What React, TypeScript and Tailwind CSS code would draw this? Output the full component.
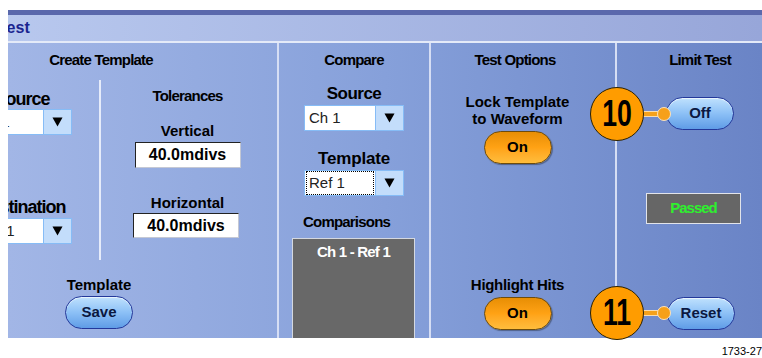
import React from "react";

type DropdownProps = {
  value: string;
  focused?: boolean;
  textPad?: string;
};

const Arrow: React.FC = () => (
  <svg width="11" height="10" viewBox="0 0 11 10">
    <path d="M0.5 0.5h10L5.5 9.5z" fill="#000" />
  </svg>
);

const Dropdown: React.FC<DropdownProps> = ({ value, focused, textPad }) => {
  return (
    <div className="flex h-[26px]">
      <div className="flex w-[72px] items-center border-[1.5px] border-[#86bcf6] bg-white px-[1px]">
        {focused ? (
          <div className="flex h-full w-full items-center border border-dotted border-black pl-[2px] text-[15px] text-[#222]">
            {value}
          </div>
        ) : (
          <span className={`text-[15px] text-[#222] ${textPad ?? "pl-[3px]"}`}>{value}</span>
        )}
      </div>
      <div className="flex w-[28px] items-center justify-center border-[1.5px] border-l-0 border-[#86bcf6] bg-[#c3ddfb]">
        <Arrow />
      </div>
    </div>
  );
};

const BlueButton: React.FC<{ label: string }> = ({ label }) => (
  <div className="flex h-[33px] w-[68px] items-center justify-center rounded-full border-[1.5px] border-[#23389a] bg-linear-to-b from-[#bfe1fd] via-[#8cc0f6] to-[#5f9ce6] text-[15px] font-bold text-[#0b1840] shadow-[inset_0_1px_1px_rgba(255,255,255,0.7)]">
    {label}
  </div>
);

const OrangeButton: React.FC<{ label: string }> = ({ label }) => (
  <div className="flex h-[33px] w-[68px] items-center justify-center rounded-full border-[1.5px] border-[#6e4c0c] bg-linear-to-b from-[#e88e04] via-[#ffa214] to-[#ffbd3c] text-[15px] font-bold text-black shadow-[1px_1px_1px_rgba(0,0,0,0.35)]">
    {label}
  </div>
);

const Callout: React.FC<{ num: string; top: string; lineTop: string; dotTop: string }> = ({
  num,
  top,
  lineTop,
  dotTop,
}) => (
  <>
    <div className={`absolute left-[636px] h-[4px] w-[24px] bg-[#f5a11c] ring-1 ring-[#f9dcb0] ${lineTop}`} />
    <div className={`absolute left-[649px] h-[14px] w-[14px] rounded-full border-[1.5px] border-[#fbe2bd] bg-[#f6a01a] ${dotTop}`} />
    <div
      className={`absolute left-[582px] flex h-[54px] w-[54px] items-center justify-center rounded-full border-[1.5px] border-[#2b2000] bg-[#ff9c00] ${top}`}
    >
      <span className="inline-block scale-x-[0.74] text-[36px] leading-none font-bold text-black">{num}</span>
    </div>
  </>
);

const Heading: React.FC<{ children: React.ReactNode; className?: string }> = ({ children, className }) => (
  <div className={`text-center text-[15px] leading-[18px] font-bold tracking-[-0.8px] text-black ${className ?? ""}`}>
    {children}
  </div>
);

const Divider: React.FC = () => <div className="w-[2px] shrink-0 bg-[#d6def4]" />;

export default function App() {
  return (
    <div className="h-[358px] w-[762px] overflow-hidden bg-white pt-[10px] pl-[8px] font-['Liberation_Sans',Arial,sans-serif]">
      <div className="h-[5px] bg-[#5a68ac]" />
      <div className="flex h-[26px] items-center overflow-hidden bg-linear-to-r from-[#b8c8ee] to-[#97a6d9]">
        <span className="ml-[-10px] text-[16px] font-bold text-[#1b2590]">Test</span>
      </div>
      <div className="h-[2px] bg-[#e4eaf8]" />

      <div className="relative flex h-[295px] bg-linear-to-r from-[#a2b6e6] via-[#86a0da] to-[#6a84c6]">
        {/* Create Template */}
        <div className="w-[269px] shrink-0 overflow-hidden">
          <div className="ml-[-83px] flex w-[352px] flex-col pt-[8px]">
            <Heading>Create Template</Heading>
            <div className="mt-[11px] flex h-[180px]">
              <div className="flex w-[174px] flex-col pl-[47px]">
                <div className="mt-[9px] w-[100px] text-center text-[18px] leading-[20px] font-bold tracking-[-1px]">
                  Source
                </div>
                <Dropdown value="Ch 1" textPad="pl-[4px]" />
                <div className="mt-[62px] w-[100px] text-center text-[18px] leading-[20px] font-bold tracking-[-1px]">
                  Destination
                </div>
                <div className="mt-[1px]">
                  <Dropdown value="Ch 1" textPad="pl-[9px]" />
                </div>
              </div>
              <div className="w-[1.5px] bg-[#e6ecfa]" />
              <div className="flex flex-col pl-[34px]">
                <div className="flex w-[106px] flex-col items-center">
                  <Heading className="mt-[7px] whitespace-nowrap">Tolerances</Heading>
                  <div className="mt-[17px] text-[15px] leading-[18px] font-bold">Vertical</div>
                  <div className="mt-[2px] flex h-[26px] w-[106px] items-center justify-center border border-t-[#222] border-r-[#c4c8d4] border-b-[#c4c8d4] border-l-[#222] bg-white text-[16px] font-bold">
                    40.0mdivs
                  </div>
                  <div className="mt-[26px] text-[15px] leading-[18px] font-bold">Horizontal</div>
                  <div className="mt-[1px] ml-[-3px] flex h-[25px] w-[106px] items-center justify-center border border-t-[#222] border-r-[#c4c8d4] border-b-[#c4c8d4] border-l-[#222] bg-white text-[16px] font-bold">
                    40.0mdivs
                  </div>
                </div>
              </div>
            </div>
            <div className="mt-[16px] flex flex-col items-center pr-[4px]">
              <div className="text-[15px] leading-[18px] font-bold">Template</div>
              <div className="mt-[2px]">
                <BlueButton label="Save" />
              </div>
            </div>
          </div>
        </div>
        <Divider />

        {/* Compare */}
        <div className="flex w-[150px] shrink-0 flex-col pt-[8px]">
          <Heading>Compare</Heading>
          <div className="mt-[15px] text-center text-[17px] leading-[20px] font-bold tracking-[-0.5px]">Source</div>
          <div className="mt-[1px] flex justify-center">
            <Dropdown value="Ch 1" />
          </div>
          <div className="mt-[18px] text-center text-[17px] leading-[20px] font-bold tracking-[-0.2px]">Template</div>
          <div className="mt-[1px] flex justify-center">
            <Dropdown value="Ref 1" focused />
          </div>
          <div className="mt-[17px] ml-[24px] text-[15px] leading-[18px] font-bold tracking-[-0.8px]">Comparisons</div>
          <div className="mt-[7px] ml-[13px] w-[123px] flex-1 border border-b-0 border-[#d4d8e0] bg-[#686868] pt-[4px] text-center text-[15px] leading-[18px] font-bold tracking-[-0.8px] text-white">
            Ch 1 - Ref 1
          </div>
        </div>
        <Divider />

        {/* Test Options */}
        <div className="flex w-[184px] shrink-0 flex-col items-center pt-[8px] pr-[11px] pb-[8px]">
          <Heading className="pr-[5px]">Test Options</Heading>
          <div className="mt-[24px] text-center text-[15px] leading-[17px] font-bold">
            Lock Template
            <br />
            to Waveform
          </div>
          <div className="mt-[4px]">
            <OrangeButton label="On" />
          </div>
          <div className="mt-auto text-[15px] leading-[18px] font-bold tracking-[-0.3px]">Highlight Hits</div>
          <div className="mt-[3px]">
            <OrangeButton label="On" />
          </div>
        </div>
        <Divider />

        {/* Limit Test */}
        <div className="flex flex-1 flex-col items-start pt-[8px] pb-[8px]">
          <Heading className="w-full pl-[21px]">Limit Test</Heading>
          <div className="mt-[28px] ml-[49px]">
            <BlueButton label="Off" />
          </div>
          <div className="mt-[63px] ml-[29px] flex h-[31px] w-[95px] items-center justify-center border border-[#e2e4ea] bg-[#666] text-[15px] font-bold tracking-[-1px] text-[#2ef02e]">
            Passed
          </div>
          <div className="mt-auto ml-[50px]">
            <BlueButton label="Reset" />
          </div>
        </div>

        <Callout num="10" top="top-[44px]" lineTop="top-[69px]" dotTop="top-[64px]" />
        <Callout num="11" top="top-[243px]" lineTop="top-[268px]" dotTop="top-[263px]" />
      </div>

      <div className="flex h-[20px] items-end justify-end">
        <span className="text-[11px] leading-[13px] text-black">1733-27</span>
      </div>
    </div>
  );
}
